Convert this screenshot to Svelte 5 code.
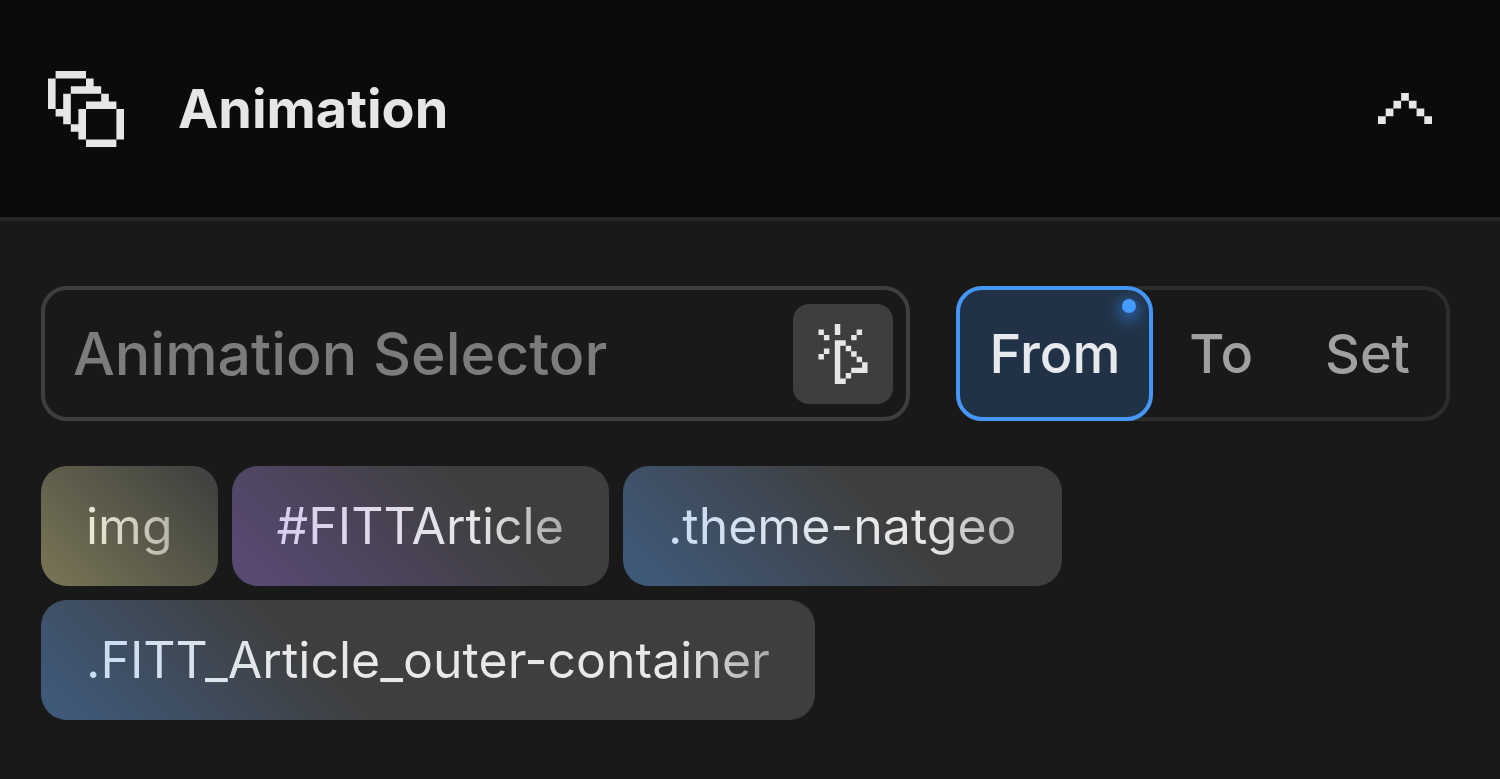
<script>
	// Animation panel state
	let open = $state(true);
	let selector = $state('');
	let mode = $state('From');

	const modes = ['From', 'To', 'Set'];

	const suggestions = [
		{ label: 'img', kind: 'tag' },
		{ label: '#FITTArticle', kind: 'id' },
		{ label: '.theme-natgeo', kind: 'class' },
		{ label: '.FITT_Article_outer-container', kind: 'class' }
	];
</script>

<section class="panel">
	<h2 class="heading">
		<button class="header" type="button" aria-expanded={open} onclick={() => (open = !open)}>
			<svg class="layers" viewBox="0 0 10 10" aria-hidden="true">
				<path
					d="M1 0h4v1H1zM0 1h1v4H0zM5 1h1v1h1v1H3V2h2zM2 3h1v4H2V6H1V5h1zM7 3h1v1h1v1H5V4h2zM4 5h1v4H4V8H3V7h1zM9 5h1v4H9zM5 9h4v1H5z"
				/>
			</svg>
			<span class="title">Animation</span>
			<svg class="chevron" class:closed={!open} viewBox="0 0 7 4" aria-hidden="true">
				<path d="M3 0h1v1H3zM2 1h1v1H2zM4 1h1v1H4zM1 2h1v1H1zM5 2h1v1H5zM0 3h1v1H0zM6 3h1v1H6z" />
			</svg>
		</button>
	</h2>

	{#if open}
		<div class="body">
			<div class="controls">
				<div class="field">
					<input
						type="text"
						aria-label="Animation Selector"
						placeholder="Animation Selector"
						bind:value={selector}
					/>
					<button class="pick" type="button" aria-label="Pick element">
						<svg viewBox="0 0 18 22" aria-hidden="true">
							<path
								d="M6 0h2v4H6zM0 2h2v2H0zM2 4h2v2H2zM14 2h2v2h-2zM12 4h2v2h-2zM2 9h2v2H2zM0 11h2v2H0z"
							/>
							<path
								d="M6 6h4v2h2v2h2v2h2v2h2v4h-6v2h-2v2H6zM8 8v12h2v-2h2v-2h4v-2h-2v-2h-2v-2h-2V8z"
								fill-rule="evenodd"
							/>
						</svg>
					</button>
				</div>

				<div class="modes" role="group" aria-label="Animation mode">
					{#each modes as name}
						<button
							class="mode"
							class:active={mode === name}
							type="button"
							aria-pressed={mode === name}
							onclick={() => (mode = name)}
						>
							{name}
							{#if mode === name}<span class="dot"></span>{/if}
						</button>
					{/each}
				</div>
			</div>

			<div class="chips">
				{#each suggestions as item}
					<button class="chip {item.kind}" type="button" onclick={() => (selector = item.label)}>
						<span>{item.label}</span>
					</button>
				{/each}
			</div>
		</div>
	{/if}
</section>

<style>
	:global(body) {
		margin: 0;
		background: #191919;
	}

	.panel {
		font-family: Inter, 'Liberation Sans', sans-serif;
		color: #e6e6e6;
	}

	button,
	input {
		box-sizing: border-box;
		margin: 0;
		border: 0;
		background: none;
		color: inherit;
		font: inherit;
	}

	button {
		cursor: pointer;
	}

	svg {
		display: block;
		flex: none;
		fill: #e6e6e6;
	}

	.heading {
		margin: 0;
		font-size: 54px;
		font-weight: 700;
	}

	/* Header */
	.header {
		display: flex;
		align-items: center;
		width: 100%;
		height: 221px;
		padding: 0 68px 0 48px;
		border-bottom: 4px solid #252525;
		background: #0b0b0b;
		text-align: left;
	}

	.layers {
		width: 76px;
		height: 76px;
	}

	.title {
		flex: 1;
		padding-left: 54px;
	}

	.chevron {
		width: 54px;
		height: 31px;
	}

	.closed {
		transform: rotate(180deg);
	}

	/* Selector and mode row */
	.body {
		padding: 65px 50px 58px 41px;
	}

	.controls {
		display: flex;
		gap: 46px;
	}

	.field {
		display: flex;
		flex: 1;
		align-items: center;
		box-sizing: border-box;
		min-width: 0;
		height: 135px;
		padding: 0 13px 0 28px;
		border: 4px solid #3e3e3e;
		border-radius: 26px;
	}

	input {
		flex: 1;
		min-width: 0;
		padding: 0;
		outline: 0;
		font-size: 59px;
		font-weight: 500;
	}

	input::placeholder {
		color: #7c7c7c;
		opacity: 1;
	}

	.pick {
		display: flex;
		align-items: center;
		justify-content: center;
		width: 100px;
		height: 100px;
		padding: 0;
		border-radius: 16px;
		background: #3e3e3e;
	}

	.pick svg {
		width: 50px;
		height: 60px;
	}

	.modes {
		display: flex;
		padding-right: 4px;
		border-radius: 26px;
		box-shadow: inset 0 0 0 4px #2d2d2d;
	}

	.mode {
		position: relative;
		padding: 0 32px;
		border: 4px solid transparent;
		border-radius: 26px;
		color: #a0a0a0;
		font-size: 54px;
		font-weight: 500;
	}

	.active {
		padding: 0 29px;
		border-color: #4597f7;
		background: #223246;
		color: #e6e9ed;
	}

	.dot {
		position: absolute;
		top: 9px;
		right: 13px;
		width: 14px;
		height: 14px;
		border-radius: 50%;
		background: #459aff;
		box-shadow: 0 4px 16px 2px #2f7bd8;
	}

	/* Suggestions */
	.chips {
		display: flex;
		flex-wrap: wrap;
		gap: 14px;
		padding-top: 45px;
	}

	.chip {
		--tint: #3f5979;
		--ink: #c8dcf2;
		height: 120px;
		padding: 0 45px;
		border-radius: 26px;
		background: linear-gradient(45deg, var(--tint) 20px, #3e3e3e 240px);
		font-size: 50px;
	}

	.chip span {
		display: block;
		background: linear-gradient(90deg, var(--ink), #e8e8e8 200px);
		background-clip: text;
		color: transparent;
		mask-image: linear-gradient(270deg, rgb(0 0 0 / 64%), #000 90px);
	}

	.tag {
		--tint: #747154;
		--ink: #eeedda;
		background: linear-gradient(45deg, var(--tint) 20px, #424340 190px);
	}

	.id {
		--tint: #584973;
		--ink: #d8cdee;
	}
</style>
